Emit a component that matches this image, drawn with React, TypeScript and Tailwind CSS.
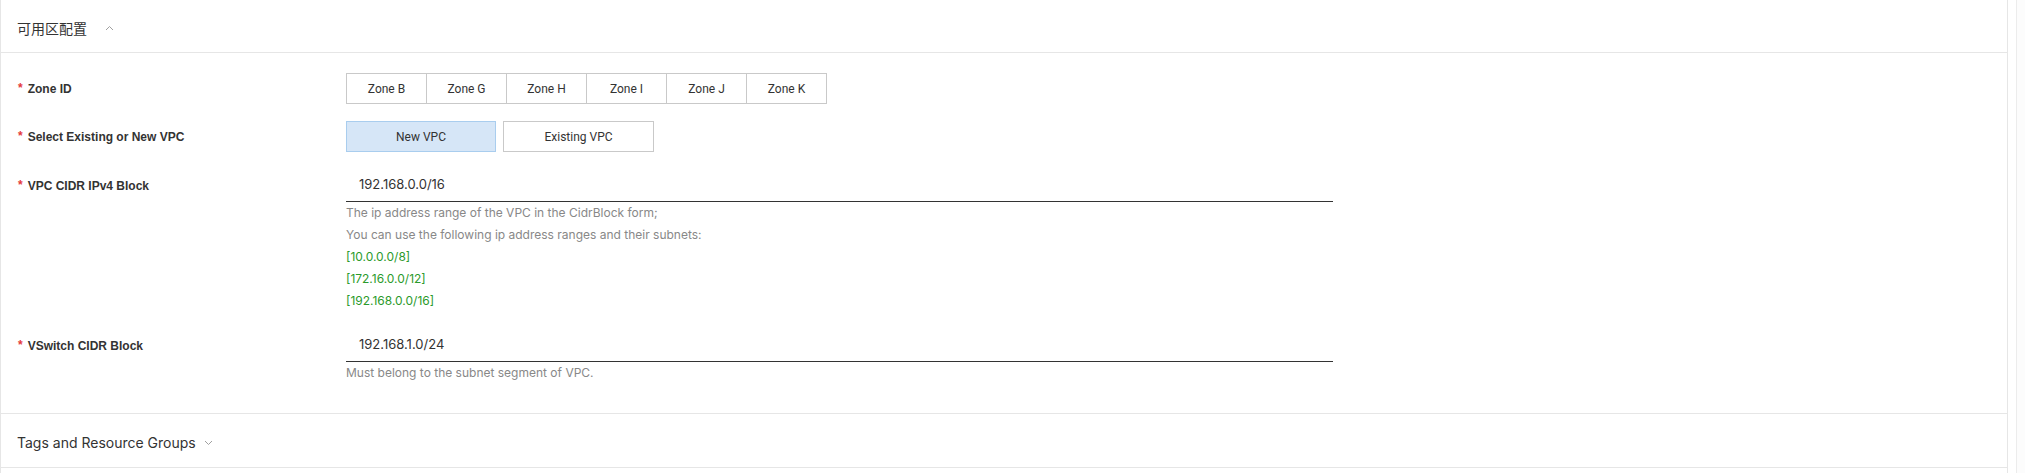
import React from "react";

const zones = ["Zone B", "Zone G", "Zone H", "Zone I", "Zone J", "Zone K"];

function Chevron({ up = false }: { up?: boolean }) {
  return (
    <svg width="9" height="6" viewBox="0 0 9 6" className="text-[#a0a0a0]">
      <path
        d={up ? "M1 5 L4.5 1.5 L8 5" : "M1 1 L4.5 4.5 L8 1"}
        fill="none"
        stroke="currentColor"
        strokeWidth="1"
      />
    </svg>
  );
}

function Label({ text, h }: { text: string; h: string }) {
  return (
    <div
      className={`w-[328px] shrink-0 flex items-center text-[12px] font-bold text-[#333] font-['Liberation_Sans'] ${h}`}
    >
      <span className="text-[#e4393c] mr-[5px] -mt-[2px]">*</span>
      {text}
    </div>
  );
}

function CidrInput({ value }: { value: string }) {
  return (
    <div className="w-[987px] h-[33px] border-b border-[#333] flex items-center pl-[13px] text-[13px] text-[#333]">
      {value}
    </div>
  );
}

export default function App() {
  return (
    <div
      className="h-[473px] w-full overflow-hidden bg-white flex"
      style={{ fontFamily: "Inter, 'Noto Sans CJK SC', sans-serif" }}
    >
      <div className="w-[2008px] shrink-0 border-l border-r border-[#e6e6e6]">
        {/* section 1 header */}
        <div className="h-[53px] border-b border-[#e6e6e6] pt-[20px] pl-[16px] flex items-start">
          <div className="flex items-center leading-[18px] h-[18px]">
            <span className="text-[14px] text-[#333]">可用区配置</span>
            <span className="ml-[18px] mb-[2px]">
              <Chevron up />
            </span>
          </div>
        </div>

        {/* section 1 body */}
        <div className="pl-[17px] pt-[20px] pb-[29px] border-b border-[#e6e6e6] flex flex-col gap-[17px]">
          <div className="flex">
            <Label text="Zone ID" h="h-[31px]" />
            <div className="flex font-[Roboto]">
              {zones.map((z, i) => (
                <div
                  key={z}
                  className={`h-[31px] w-[81px] flex items-center justify-center border border-[#c9c9c9] text-[12px] text-[#333] ${
                    i > 0 ? "-ml-px" : ""
                  }`}
                >
                  {z}
                </div>
              ))}
            </div>
          </div>

          <div className="flex">
            <Label text="Select Existing or New VPC" h="h-[31px]" />
            <div className="flex gap-[7px] font-[Roboto]">
              <div className="h-[31px] w-[150px] flex items-center justify-center border border-[#a9cdee] bg-[#d6e6f7] text-[12px] text-[#333]">
                New VPC
              </div>
              <div className="h-[31px] w-[151px] flex items-center justify-center border border-[#c9c9c9] text-[12px] text-[#333]">
                Existing VPC
              </div>
            </div>
          </div>

          <div className="flex">
            <Label text="VPC CIDR IPv4 Block" h="h-[33px]" />
            <div className="flex flex-col">
              <CidrInput value="192.168.0.0/16" />
              <div className="text-[12px] leading-[22px]">
                <p className="text-[#888]">The ip address range of the VPC in the CidrBlock form;</p>
                <p className="text-[#888]">You can use the following ip address ranges and their subnets:</p>
                <p className="text-[#2b9a2b]">[10.0.0.0/8]</p>
                <p className="text-[#2b9a2b]">[172.16.0.0/12]</p>
                <p className="text-[#2b9a2b]">[192.168.0.0/16]</p>
              </div>
            </div>
          </div>

          <div className="flex">
            <Label text="VSwitch CIDR Block" h="h-[33px]" />
            <div className="flex flex-col">
              <CidrInput value="192.168.1.0/24" />
              <p className="text-[12px] leading-[22px] text-[#888]">
                Must belong to the subnet segment of VPC.
              </p>
            </div>
          </div>
        </div>

        {/* section 2 header */}
        <div className="h-[54px] border-b border-[#e6e6e6] pt-[20px] pl-[16px] flex items-start">
          <div className="flex items-center leading-[18px] h-[18px]">
            <span className="text-[14px] text-[#333]">Tags and Resource Groups</span>
            <span className="ml-[8px]">
              <Chevron />
            </span>
          </div>
        </div>
      </div>
      <div className="w-[8px] shrink-0" />
      <div className="flex-1 border-l border-[#ececec] bg-[#fcfcfc]" />
    </div>
  );
}
